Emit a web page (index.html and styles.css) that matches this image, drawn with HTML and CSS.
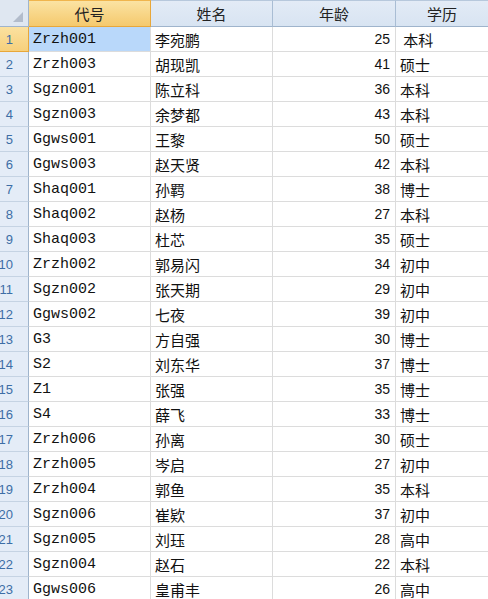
FILE: index.html
```html
<!DOCTYPE html>
<html lang="zh">
<head>
<meta charset="utf-8">
<link rel="stylesheet" href="styles.css">
</head>
<body>
<div class="sheet">
  <div class="corner"><span class="tri"></span></div>
  <div class="colhead sel">代号</div>
  <div class="colhead">姓名</div>
  <div class="colhead">年龄</div>
  <div class="colhead last">学历</div>

  <div class="rowhead sel">1</div><div class="cell code active">Zrzh001</div><div class="cell">李宛鹏</div><div class="cell num">25</div><div class="cell last">&nbsp;本科</div>
  <div class="rowhead">2</div><div class="cell code">Zrzh003</div><div class="cell">胡现凯</div><div class="cell num">41</div><div class="cell last">硕士</div>
  <div class="rowhead">3</div><div class="cell code">Sgzn001</div><div class="cell">陈立科</div><div class="cell num">36</div><div class="cell last">本科</div>
  <div class="rowhead">4</div><div class="cell code">Sgzn003</div><div class="cell">余梦都</div><div class="cell num">43</div><div class="cell last">本科</div>
  <div class="rowhead">5</div><div class="cell code">Ggws001</div><div class="cell">王黎</div><div class="cell num">50</div><div class="cell last">硕士</div>
  <div class="rowhead">6</div><div class="cell code">Ggws003</div><div class="cell">赵天贤</div><div class="cell num">42</div><div class="cell last">本科</div>
  <div class="rowhead">7</div><div class="cell code">Shaq001</div><div class="cell">孙羁</div><div class="cell num">38</div><div class="cell last">博士</div>
  <div class="rowhead">8</div><div class="cell code">Shaq002</div><div class="cell">赵杨</div><div class="cell num">27</div><div class="cell last">本科</div>
  <div class="rowhead">9</div><div class="cell code">Shaq003</div><div class="cell">杜芯</div><div class="cell num">35</div><div class="cell last">硕士</div>
  <div class="rowhead">10</div><div class="cell code">Zrzh002</div><div class="cell">郭易闪</div><div class="cell num">34</div><div class="cell last">初中</div>
  <div class="rowhead">11</div><div class="cell code">Sgzn002</div><div class="cell">张天期</div><div class="cell num">29</div><div class="cell last">初中</div>
  <div class="rowhead">12</div><div class="cell code">Ggws002</div><div class="cell">七夜</div><div class="cell num">39</div><div class="cell last">初中</div>
  <div class="rowhead">13</div><div class="cell code">G3</div><div class="cell">方自强</div><div class="cell num">30</div><div class="cell last">博士</div>
  <div class="rowhead">14</div><div class="cell code">S2</div><div class="cell">刘东华</div><div class="cell num">37</div><div class="cell last">博士</div>
  <div class="rowhead">15</div><div class="cell code">Z1</div><div class="cell">张强</div><div class="cell num">35</div><div class="cell last">博士</div>
  <div class="rowhead">16</div><div class="cell code">S4</div><div class="cell">薛飞</div><div class="cell num">33</div><div class="cell last">博士</div>
  <div class="rowhead">17</div><div class="cell code">Zrzh006</div><div class="cell">孙离</div><div class="cell num">30</div><div class="cell last">硕士</div>
  <div class="rowhead">18</div><div class="cell code">Zrzh005</div><div class="cell">岑启</div><div class="cell num">27</div><div class="cell last">初中</div>
  <div class="rowhead">19</div><div class="cell code">Zrzh004</div><div class="cell">郭鱼</div><div class="cell num">35</div><div class="cell last">本科</div>
  <div class="rowhead">20</div><div class="cell code">Sgzn006</div><div class="cell">崔欵</div><div class="cell num">37</div><div class="cell last">初中</div>
  <div class="rowhead">21</div><div class="cell code">Sgzn005</div><div class="cell">刘珏</div><div class="cell num">28</div><div class="cell last">高中</div>
  <div class="rowhead">22</div><div class="cell code">Sgzn004</div><div class="cell">赵石</div><div class="cell num">22</div><div class="cell last">本科</div>
  <div class="rowhead">23</div><div class="cell code">Ggws006</div><div class="cell">皇甫丰</div><div class="cell num">26</div><div class="cell last">高中</div>
</div>
</body>
</html>
```

FILE: styles.css
```css
html, body {
  margin: 0;
  padding: 0;
  background: #ffffff;
  overflow: hidden;
}

.sheet {
  display: grid;
  grid-template-columns: 29px 122px 122px 123px 92px;
  grid-template-rows: 27px repeat(23, 25px);
  width: 488px;
  font-family: "Noto Sans CJK SC", "Liberation Sans", sans-serif;
  font-size: 15px;
  color: #111111;
}

.corner {
  position: relative;
  background: #dfe7f1;
  border-right: 1px solid #9fb4cc;
  border-bottom: 1px solid #9fb4cc;
  box-sizing: border-box;
}

.tri {
  position: absolute;
  right: 5px;
  bottom: 4px;
  width: 0;
  height: 0;
  border-left: 10px solid transparent;
  border-bottom: 10px solid #b2bccb;
}

.colhead {
  box-sizing: border-box;
  display: flex;
  align-items: center;
  justify-content: center;
  background: linear-gradient(#e3ebf6, #d8e4f2);
  border-top: 1px solid #b7c8dc;
  border-right: 1px solid #a9bdd4;
  border-bottom: 1px solid #9fb4cc;
  color: #222222;
  font-size: 15px;
}

.colhead.sel {
  background: linear-gradient(#fbe3a3, #f5c96d);
  border-top: 1px solid #f0b54d;
  border-right: 1px solid #e8a73a;
  border-bottom: 1px solid #e8a73a;
}

.colhead.last {
  border-right: none;
}

.rowhead {
  box-sizing: border-box;
  display: flex;
  align-items: center;
  justify-content: flex-end;
  padding-right: 15px;
  background: #e4ecf7;
  border-right: 1px solid #9fb4cc;
  border-bottom: 1px solid #c5d3e3;
  color: #3d6ea6;
  font-family: "Liberation Sans", sans-serif;
  font-size: 13px;
}

.rowhead.sel {
  background: linear-gradient(#fbe1a0, #f7d07c);
  border-right: 1px solid #e8a73a;
  border-bottom: 1px solid #e8a73a;
}

.cell {
  box-sizing: border-box;
  display: flex;
  align-items: center;
  padding: 0 4px;
  border-right: 1px solid #dcdcdc;
  border-bottom: 1px solid #dcdcdc;
  white-space: pre;
  overflow: hidden;
}

.cell.code {
  font-family: "Liberation Mono", monospace;
  font-size: 15px;
  letter-spacing: 0;
}

.cell.num {
  justify-content: flex-end;
  font-family: "Liberation Sans", sans-serif;
  font-size: 14px;
  padding-right: 5px;
}

.cell.active {
  background: #b9d8fa;
}

.cell.last {
  border-right: none;
}
```
